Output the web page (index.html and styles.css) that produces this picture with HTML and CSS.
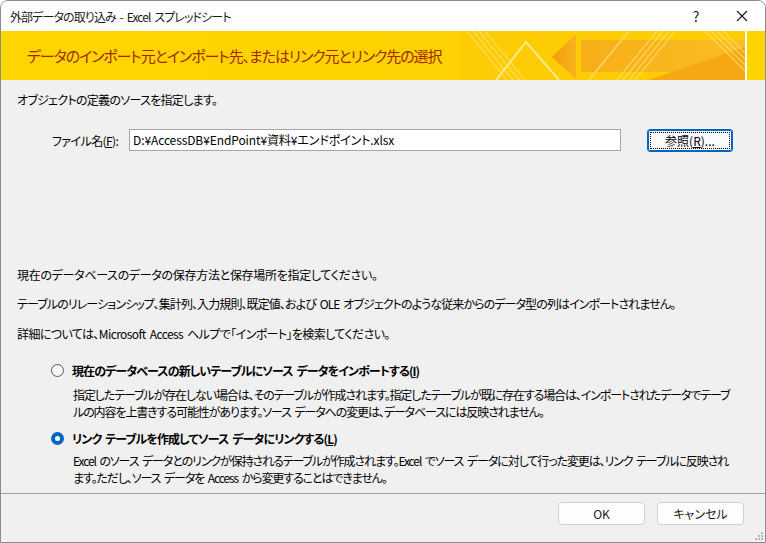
FILE: index.html
```html
<!DOCTYPE html>
<html lang="ja">
<head>
<meta charset="utf-8">
<title>外部データの取り込み - Excel スプレッドシート</title>
<link rel="stylesheet" href="styles.css">
</head>
<body>
<div class="window">
  <div class="titlebar">
    <span class="title">外部データの取り込み - Excel スプレッドシート</span>
    <div class="controls">
      <span class="help">?</span>
      <span class="close">
        <svg width="12" height="12" viewBox="0 0 12 12"><path d="M1 1 L11 11 M11 1 L1 11" stroke="#1a1a1a" stroke-width="1.1" fill="none"/></svg>
      </span>
    </div>
  </div>
  <div class="banner">
    <span class="banner-text">データのインポート元とインポート先、またはリンク元とリンク先の選択</span>
    <svg class="banner-art" width="306" height="49" viewBox="0 0 306 49">
      <defs>
        <linearGradient id="g1" x1="0" y1="0" x2="1" y2="0">
          <stop offset="0" stop-color="#f39a12"/>
          <stop offset="1" stop-color="#f8b41c"/>
        </linearGradient>
        <linearGradient id="g2" x1="0" y1="0" x2="1" y2="0">
          <stop offset="0" stop-color="#f7ae18"/>
          <stop offset="1" stop-color="#f9bd22"/>
        </linearGradient>
      </defs>
      <rect x="0" y="0" width="306" height="49" fill="#fdcc05"/>
      <polygon points="93,26 117,3 117,48" fill="url(#g1)"/>
      <rect x="122" y="9" width="164" height="32" fill="url(#g2)"/>
      <polygon points="190,49 286,49 286,16" fill="#f6a712"/>
      <g stroke="#ffe37a" stroke-opacity="0.7" stroke-width="1.2">
        <line x1="8" y1="0" x2="48" y2="49"/>
        <line x1="14" y1="0" x2="54" y2="49"/>
        <line x1="20" y1="0" x2="60" y2="49"/>
        <line x1="26" y1="0" x2="66" y2="49"/>
        <line x1="158" y1="49" x2="198" y2="0"/>
        <line x1="164" y1="49" x2="204" y2="0"/>
        <line x1="170" y1="49" x2="210" y2="0"/>
        <line x1="176" y1="49" x2="216" y2="0"/>
        <line x1="246" y1="0" x2="286" y2="40"/>
        <line x1="252" y1="0" x2="286" y2="34"/>
        <line x1="258" y1="0" x2="286" y2="28"/>
        <line x1="264" y1="0" x2="286" y2="22"/>
      </g>
      <polyline points="37,49 67,11 100,49" fill="none" stroke="#ffe98a" stroke-width="2"/>
      <line x1="130" y1="49" x2="170" y2="0" stroke="#ffe27a" stroke-width="1.5" stroke-opacity="0.8"/>
      <rect x="286" y="0" width="2" height="49" fill="#ffffff"/>
      <rect x="288" y="0" width="18" height="49" fill="#fdd300"/>
    </svg>
  </div>
  <div class="content">
    <p class="line intro">オブジェクトの定義のソースを指定します。</p>
    <div class="file-row">
      <label class="file-label">ファイル名(<u>F</u>):</label>
      <div class="file-input">D:¥AccessDB¥EndPoint¥資料¥エンドポイント.xlsx</div>
      <button class="browse"><span class="focus">参照(<u>R</u>)...</span></button>
    </div>
    <p class="line info1">現在のデータベースのデータの保存方法と保存場所を指定してください。</p>
    <p class="line info2">テーブルのリレーションシップ、集計列、入力規則、既定値、および OLE オブジェクトのような従来からのデータ型の列はインポートされません。</p>
    <p class="line info3">詳細については、Microsoft Access ヘルプで「インポート」を検索してください。</p>
    <div class="option opt1">
      <span class="radio"></span>
      <span class="opt-label">現在のデータベースの新しいテーブルにソース データをインポートする(<u>I</u>)</span>
    </div>
    <p class="desc d1">指定したテーブルが存在しない場合は、そのテーブルが作成されます。指定したテーブルが既に存在する場合は、インポートされたデータでテーブ<br>ルの内容を上書きする可能性があります。ソース データへの変更は、データベースには反映されません。</p>
    <div class="option opt2">
      <span class="radio checked"></span>
      <span class="opt-label">リンク テーブルを作成してソース データにリンクする(<u>L</u>)</span>
    </div>
    <p class="desc d2">Excel のソース データとのリンクが保持されるテーブルが作成されます。Excel でソース データに対して行った変更は、リンク テーブルに反映され<br>ます。ただし、ソース データを Access から変更することはできません。</p>
  </div>
  <div class="footer">
    <button class="btn">OK</button>
    <button class="btn">キャンセル</button>
  </div>
  <svg class="grip" width="10" height="10" viewBox="0 0 10 10">
    <g fill="#b5b5b5">
      <rect x="7" y="1" width="2" height="2"/>
      <rect x="4" y="4" width="2" height="2"/>
      <rect x="7" y="4" width="2" height="2"/>
      <rect x="1" y="7" width="2" height="2"/>
      <rect x="4" y="7" width="2" height="2"/>
      <rect x="7" y="7" width="2" height="2"/>
    </g>
  </svg>
</div>
</body>
</html>
```

FILE: styles.css
```css
html, body {
  margin: 0;
  padding: 0;
  background: #ffffff;
}
body {
  font-family: "Noto Sans CJK JP", "Noto Sans", sans-serif;
  font-feature-settings: "palt";
  font-size: 12px;
  color: #000;
}
.window {
  position: relative;
  box-sizing: border-box;
  width: 766px;
  height: 543px;
  border: 1px solid #8c8c8c;
  border-radius: 8px 8px 0 0;
  background: #f0f0f0;
  overflow: hidden;
  display: flex;
  flex-direction: column;
}
.titlebar {
  height: 30px;
  flex: none;
  background: #ffffff;
  display: flex;
  align-items: center;
  padding-left: 9px;
}
.title {
  font-size: 12px;
  color: #1a1a1a;
  flex: 1;
  letter-spacing: -0.9px;
  word-spacing: 2px;
}
.controls {
  display: flex;
  align-items: center;
  height: 30px;
}
.help {
  width: 46px;
  text-align: center;
  font-size: 14px;
  color: #1a1a1a;
}
.close {
  width: 46px;
  display: flex;
  justify-content: center;
  align-items: center;
}
.banner {
  position: relative;
  height: 49px;
  flex: none;
  background: linear-gradient(90deg, #ffd500 0%, #fed102 60%, #fdcc05 100%);
  display: flex;
  align-items: center;
  padding-left: 26px;
}
.banner-text {
  position: relative;
  z-index: 1;
  font-size: 15px;
  color: #a02a00;
  letter-spacing: -1.1px;
}
.banner-art {
  position: absolute;
  right: 0;
  top: 0;
}
.content {
  flex: 1;
  padding: 0 0 0 16px;
  display: flex;
  flex-direction: column;
}
.line {
  margin: 0;
  line-height: 17px;
  white-space: nowrap;
  letter-spacing: -0.6px;
  word-spacing: 2px;
}
.intro { margin-top: 11px; letter-spacing: -0.7px; }
.file-row {
  display: flex;
  align-items: center;
  margin-top: 21px;
  height: 22px;
}
.file-label {
  margin-left: 35px;
  width: 77px;
  letter-spacing: -0.6px;
}
.file-input {
  box-sizing: border-box;
  width: 492px;
  height: 22px;
  background: #ffffff;
  border: 1px solid #a6a6a6;
  padding-left: 3px;
  line-height: 20px;
  white-space: nowrap;
  letter-spacing: -0.1px;
}
.browse {
  box-sizing: border-box;
  margin-left: 26px;
  width: 86px;
  height: 23px;
  padding: 2px;
  border: 1px solid #0067c0;
  border-radius: 3px;
  background: #fbfbfb;
  box-shadow: inset 0 0 0 1px #0067c0;
  font: inherit;
  color: #000;
  display: flex;
}
.browse .focus {
  flex: 1;
  border: 1px dotted #000;
  display: flex;
  align-items: center;
  justify-content: center;
  line-height: 15px;
}
.info1 { margin-top: 115px; letter-spacing: -0.3px; }
.info2 { margin-top: 12px; letter-spacing: -0.9px; }
.info3 { margin-top: 13px; letter-spacing: -0.6px; }
.option {
  display: flex;
  align-items: center;
  margin-left: 34px;
  height: 17px;
}
.opt1 { margin-top: 20px; }
.opt2 { margin-top: 10px; }
.radio {
  box-sizing: border-box;
  width: 13px;
  height: 13px;
  border-radius: 50%;
  border: 1px solid #5a5a5a;
  background: #f7f7f7;
  margin-right: 8px;
  flex: none;
}
.radio.checked {
  border: 4px solid #0067c0;
  background: #ffffff;
}
.opt-label {
  font-weight: bold;
  letter-spacing: -0.9px;
  word-spacing: 2px;
  white-space: nowrap;
}
.desc {
  margin: 7px 0 0 56px;
  line-height: 17px;
  white-space: nowrap;
  letter-spacing: -1.1px;
  word-spacing: 2px;
}
.d2 { margin-top: 5px; }
.footer {
  flex: none;
  height: 40px;
  border-top: 1px solid #a0a0a0;
  display: flex;
  justify-content: flex-end;
  align-items: flex-start;
  gap: 12px;
  padding: 8px 21px 0 0;
}
.btn {
  box-sizing: border-box;
  width: 87px;
  height: 23px;
  background: #fdfdfd;
  border: 1px solid #d0d0d0;
  border-radius: 4px;
  font: inherit;
  font-size: 12px;
  color: #1a1a1a;
  padding: 0;
}
.grip {
  position: absolute;
  right: 1px;
  bottom: 1px;
}
```
